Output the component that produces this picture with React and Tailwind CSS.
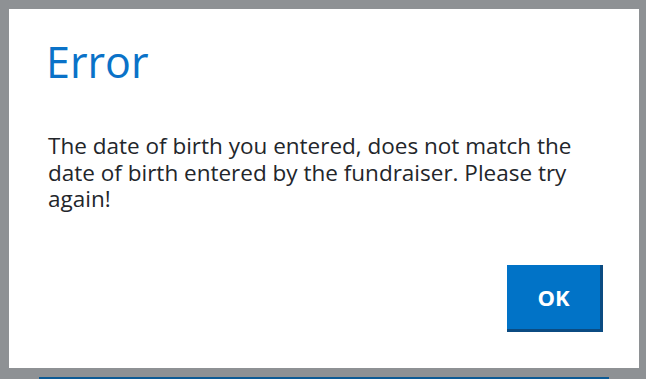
export default function App() {
  return (
    <div
      className="flex h-[379px] w-full flex-col overflow-hidden bg-[#8e9194] pl-[9px] pr-[7px] pt-[9px]"
      style={{ fontFamily: '"Open Sans", "Noto Sans", sans-serif' }}
    >
      <div className="flex h-[359px] shrink-0 flex-col bg-white pl-[39px] pr-[36px] pb-[36px]">
        <h1 className="-ml-[2px] mt-[26px] text-[43px] leading-[54px] text-[#0a72c8]">Error</h1>
        <p className="mt-[44px] max-w-[532px] text-[22.5px] leading-[26.5px] text-[#23262b]">
          The date of birth you entered, does not match the date of birth entered by the
          fundraiser. Please try again!
        </p>
        <div className="mt-auto flex justify-end">
          <button className="h-[67px] w-[96px] border-b-[3px] border-r-[3px] border-[#0b4b82] bg-[#0173c7] text-[22px] font-bold text-white">
            OK
          </button>
        </div>
      </div>
      <div className="ml-[30px] mt-[9px] h-[3px] w-[570px] shrink-0 bg-[#0d5a94]" />
    </div>
  );
}
